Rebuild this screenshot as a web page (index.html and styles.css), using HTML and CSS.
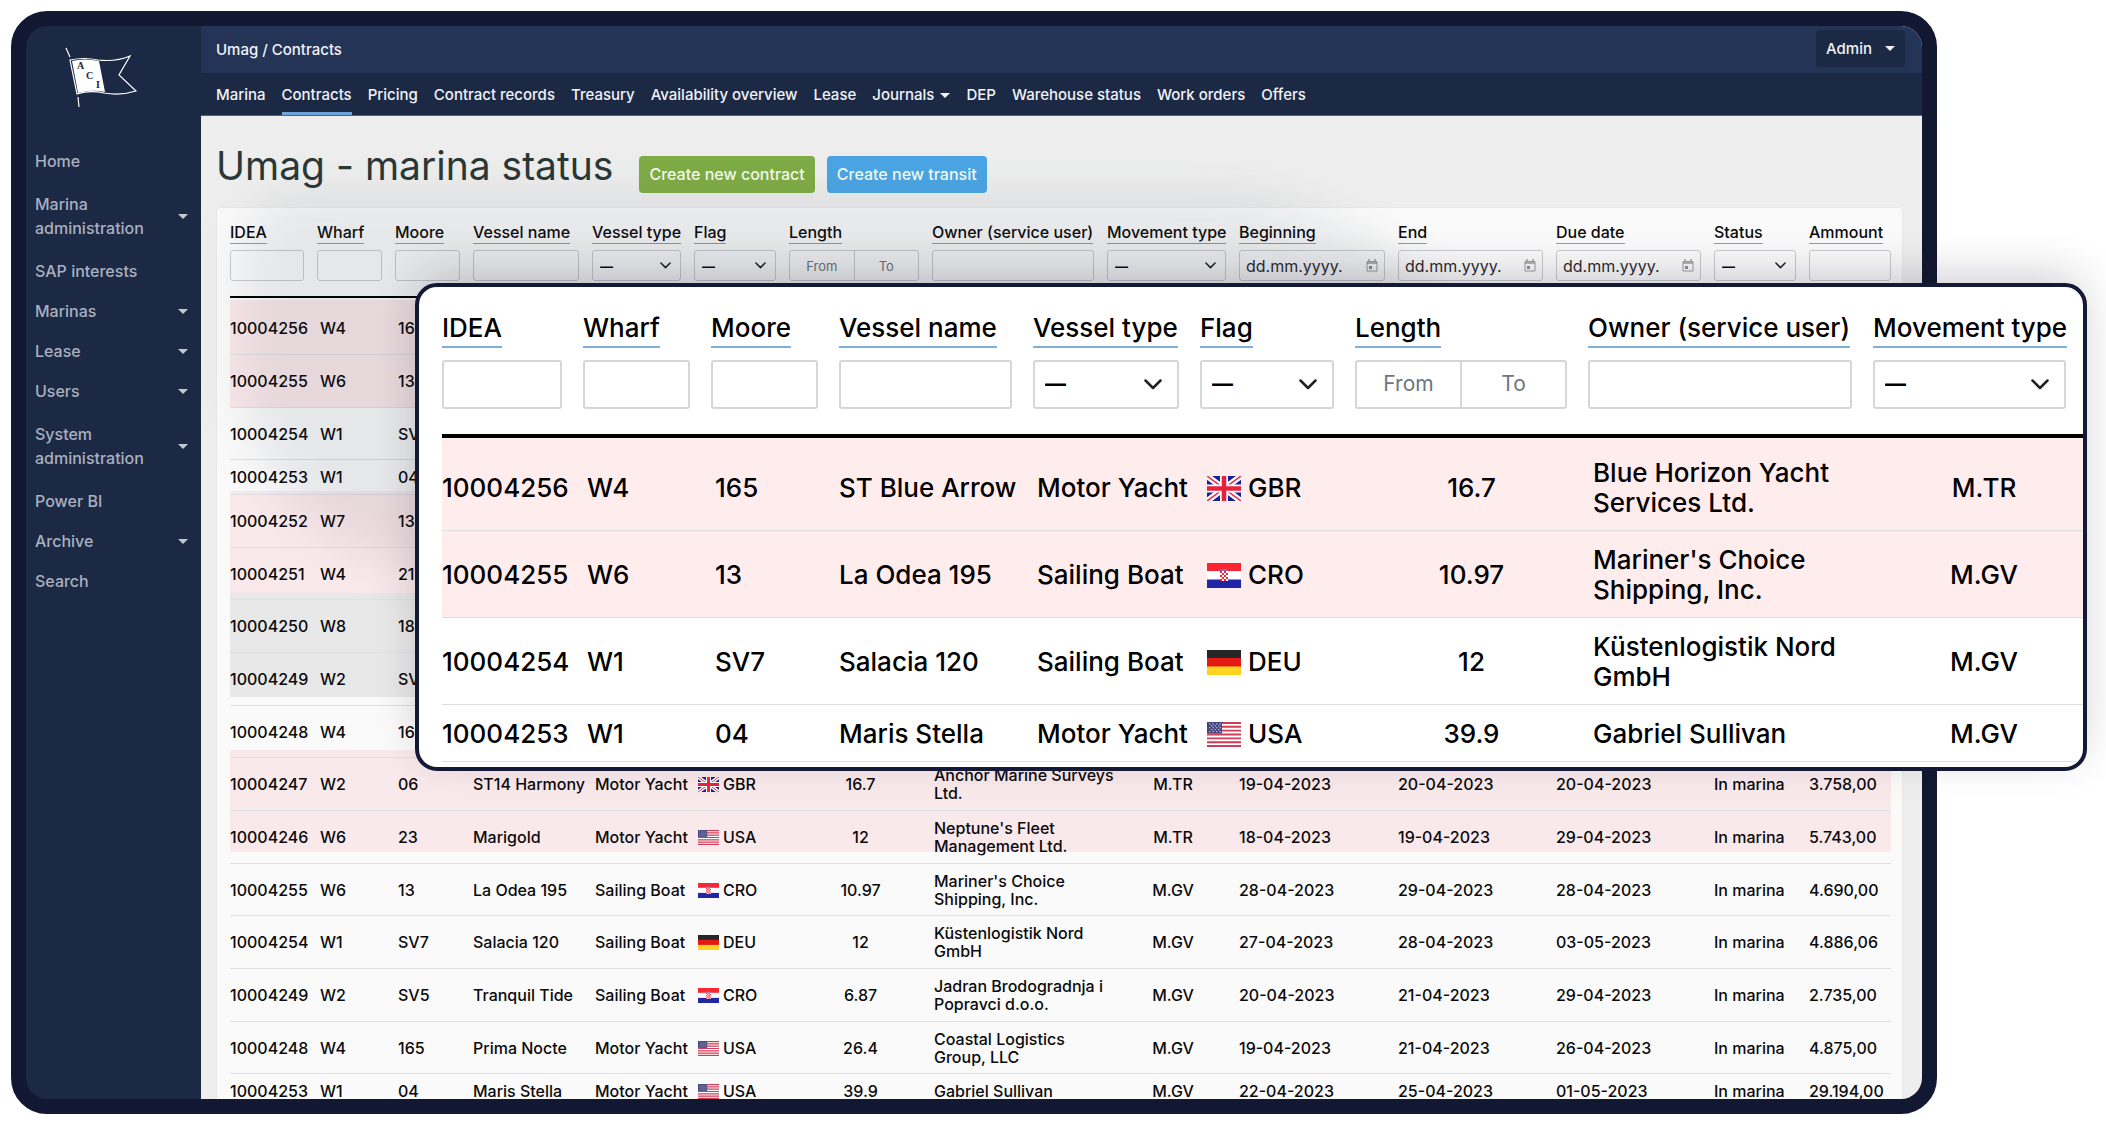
FILE: index.html
```
<!DOCTYPE html>
<html lang="en">
<head>
    <meta charset="UTF-8">
    <meta name="viewport" content="width=device-width, initial-scale=1.0">
    <title>Umag - marina status</title>
    <link rel="stylesheet" href="styles.css">
</head>
<body>
    <!-- Shared flag icons -->
    <svg class="sprite" aria-hidden="true">
        <symbol id="flag-GBR" viewBox="0 0 34 25" preserveAspectRatio="none">
            <rect width="34" height="25" fill="#1a1f9c"/>
            <path d="M0 0L34 25M34 0L0 25" stroke="#fff" stroke-width="6"/>
            <path d="M0 0L34 25M34 0L0 25" stroke="#e8384f" stroke-width="1.6"/>
            <path d="M17 0V25M0 12.5H34" stroke="#fff" stroke-width="8"/>
            <path d="M17 0V25M0 12.5H34" stroke="#e6233f" stroke-width="4.6"/>
        </symbol>
        <symbol id="flag-CRO" viewBox="0 0 34 25" preserveAspectRatio="none">
            <rect width="34" height="25" fill="#fff"/>
            <rect width="34" height="8" fill="#fb2431"/>
            <rect y="16.500" width="34" height="8.500" fill="#1f25a5"/>
            <rect x="13" y="6" width="8" height="3" fill="#8a6ab0"/>
            <rect x="13" y="8" width="8" height="10" fill="#fff"/>
            <path d="M13 9H21M15 11H21M13 13H21M15 15H21M13 17H21" stroke="#fb2431" stroke-width="2" stroke-dasharray="2 2"/>
        </symbol>
        <symbol id="flag-DEU" viewBox="0 0 34 25" preserveAspectRatio="none">
            <rect width="34" height="25" fill="#262626"/>
            <rect y="8" width="34" height="9" fill="#e31a14"/>
            <rect y="16.500" width="34" height="8.500" fill="#ffd321"/>
        </symbol>
        <symbol id="flag-USA" viewBox="0 0 34 26" preserveAspectRatio="none">
            <rect width="34" height="26" fill="#fff"/>
            <path d="M0 1H34M0 5H34M0 9H34M0 13H34M0 17H34M0 21H34M0 25H34" stroke="#cf3d58" stroke-width="2"/>
            <rect width="15" height="12" fill="#45457e"/>
            <path d="M2 2H14M4 4H14M2 6H14M4 8H14M2 10H14" stroke="#c9c9e0" stroke-width="1" stroke-dasharray="1.500 2"/>
        </symbol>
        <symbol id="calendar" viewBox="0 0 12 13">
            <path d="M1 2.500H11V12H1Z" fill="none" stroke="#9b9da0"/>
            <path d="M1 4H11M3 0V3M9 0V3" stroke="#9b9da0" stroke-width="1.400"/>
            <rect x="3" y="7" width="3" height="3" fill="#8b8d90"/>
        </symbol>
    </svg>

    <div class="frame">
        <aside class="sidebar">
            <a class="logo" href="#" aria-label="ACI">
                <svg viewBox="0 0 110 85" width="110" height="85">
                    <g fill="none" stroke="#fff" stroke-width="1.200">
                        <path d="M16 13L20 22M28 62L29 72"/>
                        <path d="M20 25Q34 22 48 25Q66 27 80 21L69 40L86 56Q70 61 54 58Q40 55 27 59Z"/>
                    </g>
                    <path d="M22 26Q34 23 49 26L55 57Q42 54 28 58Z" fill="#fff"/>
                    <g class="logo-text">
                        <text x="27" y="34">A</text>
                        <text x="36" y="44">C</text>
                        <text x="46" y="53">I</text>
                    </g>
                </svg>
            </a>
            <ul class="side-nav">
                <li><a href="#">Home</a></li>
                <li class="two-line has-menu"><a href="#">Marina administration</a></li>
                <li><a href="#">SAP interests</a></li>
                <li class="has-menu"><a href="#">Marinas</a></li>
                <li class="has-menu"><a href="#">Lease</a></li>
                <li class="has-menu"><a href="#">Users</a></li>
                <li class="two-line has-menu"><a href="#">System administration</a></li>
                <li><a href="#">Power BI</a></li>
                <li class="has-menu"><a href="#">Archive</a></li>
                <li><a href="#">Search</a></li>
            </ul>
        </aside>

        <div class="main">
            <header class="topbar">
                <div class="breadcrumb">Umag / Contracts</div>
                <button class="admin-button" type="button">Admin <span class="caret"></span></button>
            </header>
            <nav class="tabs">
                <a href="#">Marina</a>
                <a href="#" class="active">Contracts</a>
                <a href="#">Pricing</a>
                <a href="#">Contract records</a>
                <a href="#">Treasury</a>
                <a href="#">Availability overview</a>
                <a href="#">Lease</a>
                <a href="#">Journals <span class="caret"></span></a>
                <a href="#">DEP</a>
                <a href="#">Warehouse status</a>
                <a href="#">Work orders</a>
                <a href="#">Offers</a>
            </nav>

            <div class="content">
                <div class="title-row">
                    <h1>Umag - marina status</h1>
                    <button class="btn btn-green" type="button">Create new contract</button>
                    <button class="btn btn-blue" type="button">Create new transit</button>
                </div>
                <div class="card">
                    <table class="contracts" id="contracts"></table>
                </div>
            </div>
        </div>
    </div>

    <section class="popup">
        <div class="popup-body">
            <table class="contracts large" id="contractsLarge"></table>
        </div>
    </section>

    <script src="script.js"></script>
</body>
</html>
```
FILE: styles.css
```
* {
    box-sizing: border-box;
}

body {
    margin: 0;
    padding: 11px 169px 12px 11px;
    background: #fff;
    color: #0a0a0c;
    font-family: Inter, "Liberation Sans", sans-serif;
    font-size: 15px;
    font-weight: 500;
    position: relative;
    overflow: hidden;
}

a {
    color: inherit;
    text-decoration: none;
}

button, input, select {
    font: inherit;
    color: inherit;
}

.sprite {
    position: absolute;
    width: 0;
    height: 0;
}

.frame {
    display: flex;
    height: calc(100vh - 23px);
    border: 15px solid #131832;
    border-radius: 36px;
    background: #131832;
    overflow: hidden;
}

.caret {
    display: inline-block;
    border: 5px solid transparent;
    border-top-color: currentColor;
    border-bottom: 0;
    vertical-align: 2px;
}

/* Sidebar */
.sidebar {
    flex: 0 0 175px;
    background: #1c2945;
    color: #a9b0be;
    font-size: 16px;
}

.logo {
    display: block;
    padding: 9px 0 21px 24px;
}

.logo svg {
    display: block;
}

.logo-text {
    font-family: "Liberation Serif", serif;
    font-size: 10px;
    font-weight: bold;
    fill: #1c2945;
}

.side-nav {
    list-style: none;
    margin: 0;
    padding: 0 13px 0 9px;
}

.side-nav li {
    display: flex;
    align-items: center;
    justify-content: space-between;
    padding: 8px 0;
    line-height: 24px;
    font-weight: 450;
}

.side-nav .two-line {
    padding: 11px 0;
}

.side-nav .two-line a {
    width: 120px;
}

.has-menu::after {
    content: '';
    border: 5px solid transparent;
    border-top-color: #c3c9d4;
    border-bottom: 0;
}

/* Header */
.main {
    flex: 1;
    min-width: 0;
    display: flex;
    flex-direction: column;
    background: #eee;
}

.topbar {
    display: flex;
    align-items: center;
    justify-content: space-between;
    height: 47px;
    padding: 0 17px 0 15px;
    background: #243456;
    color: #f1f3f7;
}

.admin-button {
    display: flex;
    align-items: center;
    gap: 13px;
    height: 37px;
    margin-bottom: 2px;
    padding: 0 10px;
    border: 0;
    border-radius: 4px;
    background: #1c2945;
}

.tabs {
    display: flex;
    gap: 16px;
    height: 43px;
    padding: 0 15px;
    background: #1c2945;
    border-bottom: 1px solid #56617a;
    color: #f1f3f7;
    line-height: 43px;
    white-space: nowrap;
}

.tabs .active {
    border-bottom: 3px solid #6ca4dc;
}

.tabs .caret {
    margin-left: 2px;
}

/* Page content */
.content {
    flex: 1;
    padding: 0 19px 0 15px;
    min-height: 0;
}

.title-row {
    display: flex;
    align-items: center;
    height: 91px;
    padding-top: 25px;
}

h1 {
    margin: 0 26px 17px 0;
    font-size: 39px;
    line-height: 46px;
    font-weight: 400;
    color: #2c3836;
}

.btn {
    height: 37px;
    margin-right: 12px;
    padding: 0 10px;
    border: 0;
    border-radius: 4px;
    color: #f4fbee;
    font-size: 16px;
    font-weight: 450;
}

.btn-green {
    background: #7fac45;
}

.btn-blue {
    background: #4ba5e4;
}

.card {
    height: 100%;
    padding: 14px 11px 0 13px;
    background: #fafafa;
    border: 1px solid #e8e8e8;
    border-radius: 4px;
}

/* Contracts table */
.contracts {
    width: 100%;
    table-layout: fixed;
    border-collapse: separate;
    border-spacing: 0;
    font-size: 16px;
    background: linear-gradient(transparent 78px, #fae9eb 78px, #fae9eb 186px,
        transparent 186px, transparent 269px, #fae9eb 269px, #fae9eb 371px,
        #e8e8e8 371px, #e8e8e8 475px, transparent 475px, transparent 528px,
        #fae9eb 528px, #fae9eb 630px, transparent 630px);
}

.contracts th {
    padding: 0 13px 15px 0;
    text-align: left;
    vertical-align: top;
    font-weight: 500;
    line-height: 20px;
    white-space: nowrap;
    border-bottom: 2px solid #000;
}

.contracts th:last-child {
    padding-right: 0;
}

.contracts label {
    display: inline-block;
    padding-bottom: 1px;
    margin-bottom: 6px;
    border-bottom: 1px solid #6ca4dc;
}

.contracts td {
    padding: 8px 0;
    line-height: 18px;
    font-weight: 450;
    white-space: nowrap;
    border-bottom: 1px solid #dfe0e4;
}

.contracts tbody tr:nth-child(3n) td {
    padding-bottom: 7px;
}

.contracts tbody tr:first-child td {
    padding-top: 12px;
}

.contracts .indent {
    padding-left: 3px;
}

.contracts .center {
    text-align: center;
}

.contracts .owner {
    padding-left: 2px;
}

.contracts .flag {
    padding-left: 4px;
}

.flag span {
    display: flex;
    align-items: center;
    gap: 4px;
}

.flag svg {
    width: 21px;
    height: 15px;
}

.field {
    display: flex;
    height: 31px;
    border: 1px solid #c9cbcf;
    border-radius: 3px;
    align-items: center;
}

.field input, .field select {
    flex: 1;
    min-width: 0;
    width: 100%;
    height: 100%;
    padding: 0 6px;
    border: 0;
    background: transparent;
}

.field select {
    appearance: none;
    padding: 0 7px;
    font-size: 13px;
    font-weight: 700;
    background: url("data:image/svg+xml,%3Csvg xmlns='http://www.w3.org/2000/svg' viewBox='0 0 18 11'%3E%3Cpath d='M1.500 1.500L9 9L16.500 1.500' fill='none' stroke='%23222' stroke-width='2.500' stroke-linecap='round' stroke-linejoin='round'/%3E%3C/svg%3E") no-repeat right 9px center / 11px 7px;
}

.field.range input {
    padding: 0;
    text-align: center;
    font-size: 13px;
    font-weight: 400;
}

.field.range input + input {
    border-left: 1px solid #c9cbcf;
}

.field.range input::placeholder {
    color: #6f757c;
    opacity: 1;
}

.field.date input {
    padding-right: 0;
    font-weight: 400;
}

.field.date input::placeholder {
    color: #2a2c30;
    opacity: 1;
}

.field.date svg {
    flex: none;
    width: 12px;
    height: 13px;
    margin-right: 6px;
}

/* Enlarged view */
.popup {
    position: absolute;
    top: 283px;
    left: 415px;
    right: 19px;
    z-index: 1;
}

.popup::before {
    content: '';
    position: absolute;
    z-index: -1;
    top: -88px;
    left: -175px;
    width: 76%;
    height: 370px;
    border-radius: 60px 300px 0 200px;
    background: rgba(30, 40, 70, 0.09);
    filter: blur(24px);
}

.popup-body {
    height: 488px;
    padding: 27px 0 0 23px;
    background: #fff;
    border: 4px solid #141936;
    border-radius: 22px;
    box-shadow: 0 -12px 48px -8px rgba(20, 20, 40, 0.24);
    overflow: hidden;
}

.large {
    font-size: 26px;
    color: #000;
    background: none;
}

.large th {
    padding: 0 21px 25px 0;
    line-height: 28px;
    border-bottom-width: 4px;
}

.large th:last-child {
    padding-right: 17px;
}

.large label {
    padding-bottom: 4px;
    margin-bottom: 12px;
    border-bottom: 2px solid #7fb0dd;
}

.large td,
.large tbody tr:nth-child(3n) td {
    padding-top: 14px;
    padding-bottom: 12px;
    line-height: 30px;
    border-bottom: 1px solid #dcdee3;
}

.large tbody tr:first-child td {
    padding-top: 20px;
}

.large .marked td {
    background: #ffeced;
}

.large .indent {
    padding-left: 4px;
}

.large .owner {
    padding-left: 5px;
}

.large .center:last-child {
    padding-left: 12px;
}

.large .flag {
    padding-left: 7px;
}

.large .flag span {
    gap: 7px;
}

.large .flag svg {
    width: 34px;
    height: 25px;
}

.large .field {
    height: 49px;
    border-width: 2px;
    border-color: #d4d6da;
}

.large .field.range input {
    padding-bottom: 3px;
    font-size: 21px;
}

.large .field.range input + input {
    border-left: 2px solid #d4d6da;
}

.large .field select {
    padding: 0 10px 2px;
    font-size: 21px;
    background-position: right 15px center;
    background-size: 18px 11px;
}
```
FILE: script.js
```
// type: text | select | range | date, cls: class of the body cells
const columns = [
    { name: 'IDEA', type: 'text', width: 87, large: 141 },
    { name: 'Wharf', type: 'text', width: 78, large: 128, cls: 'indent' },
    { name: 'Moore', type: 'text', width: 78, large: 128, cls: 'indent' },
    { name: 'Vessel name', type: 'text', width: 119, large: 194 },
    { name: 'Vessel type', type: 'select', width: 102, large: 167, cls: 'indent' },
    { name: 'Flag', type: 'select', width: 95, large: 155, cls: 'flag' },
    { name: 'Length', type: 'range', width: 143, large: 233, cls: 'center' },
    { name: 'Owner (service user)', type: 'text', width: 175, large: 285, cls: 'owner' },
    { name: 'Movement type', type: 'select', width: 132, cls: 'center' },
    { name: 'Beginning', type: 'date', width: 159 },
    { name: 'End', type: 'date', width: 158 },
    { name: 'Due date', type: 'date', width: 158 },
    { name: 'Status', type: 'select', width: 95 },
    { name: 'Ammount', type: 'text' }
];

const rows = [
    ['10004256', 'W4', '165', 'ST Blue Arrow', 'Motor Yacht', 'GBR', '16.7', 'Blue Horizon Yacht<br>Services Ltd.', 'M.TR', '', '', '', '', ''],
    ['10004255', 'W6', '13', 'La Odea 195', 'Sailing Boat', 'CRO', '10.97', 'Mariner\'s Choice<br>Shipping, Inc.', 'M.GV', '', '', '', '', ''],
    ['10004254', 'W1', 'SV7', 'Salacia 120', 'Sailing Boat', 'DEU', '12', 'Küstenlogistik Nord<br>GmbH', 'M.GV', '', '', '', '', ''],
    ['10004253', 'W1', '04', 'Maris Stella', 'Motor Yacht', 'USA', '39.9', 'Gabriel Sullivan', 'M.GV', '', '', '', '', ''],
    ['10004252', 'W7', '13', '', '', '', '', '<br><br>', '', '', '', '', '', ''],
    ['10004251', 'W4', '214', '', '', '', '', '<br><br>', '', '', '', '', '', ''],
    ['10004250', 'W8', '18', '', '', '', '', '<br><br>', '', '', '', '', '', ''],
    ['10004249', 'W2', 'SV5', '', '', '', '', '<br><br>', '', '', '', '', '', ''],
    ['10004248', 'W4', '165', '', '', '', '', '<br><br>', '', '', '', '', '', ''],
    ['10004247', 'W2', '06', 'ST14 Harmony', 'Motor Yacht', 'GBR', '16.7', 'Anchor Marine Surveys<br>Ltd.', 'M.TR', '19-04-2023', '20-04-2023', '20-04-2023', 'In marina', '3.758,00'],
    ['10004246', 'W6', '23', 'Marigold', 'Motor Yacht', 'USA', '12', 'Neptune\'s Fleet<br>Management Ltd.', 'M.TR', '18-04-2023', '19-04-2023', '29-04-2023', 'In marina', '5.743,00'],
    ['10004255', 'W6', '13', 'La Odea 195', 'Sailing Boat', 'CRO', '10.97', 'Mariner\'s Choice<br>Shipping, Inc.', 'M.GV', '28-04-2023', '29-04-2023', '28-04-2023', 'In marina', '4.690,00'],
    ['10004254', 'W1', 'SV7', 'Salacia 120', 'Sailing Boat', 'DEU', '12', 'Küstenlogistik Nord<br>GmbH', 'M.GV', '27-04-2023', '28-04-2023', '03-05-2023', 'In marina', '4.886,06'],
    ['10004249', 'W2', 'SV5', 'Tranquil Tide', 'Sailing Boat', 'CRO', '6.87', 'Jadran Brodogradnja i<br>Popravci d.o.o.', 'M.GV', '20-04-2023', '21-04-2023', '29-04-2023', 'In marina', '2.735,00'],
    ['10004248', 'W4', '165', 'Prima Nocte', 'Motor Yacht', 'USA', '26.4', 'Coastal Logistics<br>Group, LLC', 'M.GV', '19-04-2023', '21-04-2023', '26-04-2023', 'In marina', '4.875,00'],
    ['10004253', 'W1', '04', 'Maris Stella', 'Motor Yacht', 'USA', '39.9', 'Gabriel Sullivan', 'M.GV', '22-04-2023', '25-04-2023', '01-05-2023', 'In marina', '29.194,00']
];

function field(type, id) {
    if (type === 'select') {
        return `<div class="field"><select id="${id}"><option>—</option></select></div>`;
    }
    if (type === 'range') {
        return `<div class="field range"><input id="${id}" type="text" placeholder="From"><input type="text" placeholder="To" aria-label="Length to"></div>`;
    }
    if (type === 'date') {
        return `<div class="field date"><input id="${id}" type="text" placeholder="dd.mm.yyyy."><svg><use href="#calendar"/></svg></div>`;
    }
    return `<div class="field"><input id="${id}" type="text"></div>`;
}

function cell(value, col) {
    if (col.cls === 'flag' && value) {
        value = `<span><svg><use href="#flag-${value}"/></svg>${value}</span>`;
    }
    return `<td class="${col.cls || ''}">${value}</td>`;
}

function renderTable(id, cols, data, widthKey) {
    const colgroup = cols.map(c => `<col${c[widthKey] ? ` style="width: ${c[widthKey]}px"` : ''}>`).join('');
    const head = cols.map((c, i) => `<th><label for="${id}-${i}">${c.name}</label>${field(c.type, id + '-' + i)}</th>`).join('');
    const body = data.map((row, r) => `<tr class="${r < 2 ? 'marked' : ''}">${cols.map((c, i) => cell(row[i], c)).join('')}</tr>`).join('');
    document.getElementById(id).innerHTML = `<colgroup>${colgroup}</colgroup><thead><tr>${head}</tr></thead><tbody>${body}</tbody>`;
}

renderTable('contracts', columns, rows, 'width');
renderTable('contractsLarge', columns.slice(0, 9), rows.slice(0, 4), 'large');
```
